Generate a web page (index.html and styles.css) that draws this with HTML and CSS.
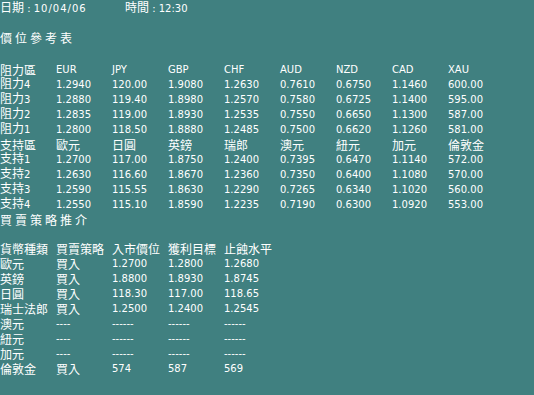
FILE: index.html
```html
<!DOCTYPE html>
<html>
<head>
<meta charset="utf-8">
<link rel="stylesheet" href="styles.css">
</head>
<body>
<div class="top">
  <div class="date"><span class="k">日期</span> : <span class="num">10/04/06</span></div>
  <div class="time"><span class="k">時間</span> : 12:30</div>
</div>
<div class="title k">價位參考表</div>
<table class="grid">
  <tr><td class="k">阻力區</td><td>EUR</td><td>JPY</td><td>GBP</td><td>CHF</td><td>AUD</td><td>NZD</td><td>CAD</td><td>XAU</td></tr>
  <tr><td><span class="k">阻力</span>4</td><td>1.2940</td><td>120.00</td><td>1.9080</td><td>1.2630</td><td>0.7610</td><td>0.6750</td><td>1.1460</td><td>600.00</td></tr>
  <tr><td><span class="k">阻力</span>3</td><td>1.2880</td><td>119.40</td><td>1.8980</td><td>1.2570</td><td>0.7580</td><td>0.6725</td><td>1.1400</td><td>595.00</td></tr>
  <tr><td><span class="k">阻力</span>2</td><td>1.2835</td><td>119.00</td><td>1.8930</td><td>1.2535</td><td>0.7550</td><td>0.6650</td><td>1.1300</td><td>587.00</td></tr>
  <tr><td><span class="k">阻力</span>1</td><td>1.2800</td><td>118.50</td><td>1.8880</td><td>1.2485</td><td>0.7500</td><td>0.6620</td><td>1.1260</td><td>581.00</td></tr>
  <tr class="k"><td>支持區</td><td>歐元</td><td>日圓</td><td>英鎊</td><td>瑞郎</td><td>澳元</td><td>紐元</td><td>加元</td><td>倫敦金</td></tr>
  <tr><td><span class="k">支持</span>1</td><td>1.2700</td><td>117.00</td><td>1.8750</td><td>1.2400</td><td>0.7395</td><td>0.6470</td><td>1.1140</td><td>572.00</td></tr>
  <tr><td><span class="k">支持</span>2</td><td>1.2630</td><td>116.60</td><td>1.8670</td><td>1.2360</td><td>0.7350</td><td>0.6400</td><td>1.1080</td><td>570.00</td></tr>
  <tr><td><span class="k">支持</span>3</td><td>1.2590</td><td>115.55</td><td>1.8630</td><td>1.2290</td><td>0.7265</td><td>0.6340</td><td>1.1020</td><td>560.00</td></tr>
  <tr><td><span class="k">支持</span>4</td><td>1.2550</td><td>115.10</td><td>1.8590</td><td>1.2235</td><td>0.7190</td><td>0.6300</td><td>1.0920</td><td>553.00</td></tr>
</table>
<div class="subtitle k">買賣策略推介</div>
<table class="grid strat">
  <tr class="k"><td>貨幣種類</td><td>買賣策略</td><td>入市價位</td><td>獲利目標</td><td class="wide">止蝕水平</td></tr>
  <tr><td class="k">歐元</td><td class="k">買入</td><td>1.2700</td><td>1.2800</td><td>1.2680</td></tr>
  <tr><td class="k">英鎊</td><td class="k">買入</td><td>1.8800</td><td>1.8930</td><td>1.8745</td></tr>
  <tr><td class="k">日圓</td><td class="k">買入</td><td>118.30</td><td>117.00</td><td>118.65</td></tr>
  <tr><td class="k">瑞士法郎</td><td class="k">買入</td><td>1.2500</td><td>1.2400</td><td>1.2545</td></tr>
  <tr><td class="k">澳元</td><td>----</td><td>------</td><td>------</td><td>------</td></tr>
  <tr><td class="k">紐元</td><td>----</td><td>------</td><td>------</td><td>------</td></tr>
  <tr><td class="k">加元</td><td>----</td><td>------</td><td>------</td><td>------</td></tr>
  <tr><td class="k">倫敦金</td><td class="k">買入</td><td>574</td><td>587</td><td>569</td></tr>
</table>
</body>
</html>
```

FILE: styles.css
```css
html, body {
  margin: 0;
  padding: 0;
  background: #408080;
}
body {
  color: #ffffff;
  font-family: "DejaVu Sans", sans-serif;
  font-size: 10px;
  line-height: 15px;
}
.k {
  font-family: "Noto Sans CJK TC", "Noto Sans CJK SC", sans-serif;
  font-size: 12px;
}
.grid span.k {
  display: inline-block;
  height: 15px;
  line-height: 11.6px;
  vertical-align: baseline;
}
.top {
  display: flex;
  height: 18px;
  line-height: 18px;
}
.top span.k {
  display: inline-block;
  height: 18px;
  line-height: 14.6px;
  vertical-align: baseline;
}
.date {
  width: 125px;
}
.num {
  letter-spacing: 1px;
}
.title {
  margin-top: 12px;
  height: 15px;
  line-height: 15px;
  letter-spacing: 3px;
}
.grid {
  margin-top: 17px;
  border-collapse: collapse;
  border-spacing: 0;
  table-layout: fixed;
}
.grid td {
  width: 56px;
  height: 15px;
  line-height: 15px;
  padding: 0;
  white-space: nowrap;
  vertical-align: middle;
}
.grid td.wide {
  width: 70px;
}
.subtitle {
  height: 15px;
  line-height: 15px;
  letter-spacing: 3px;
}
.strat {
  margin-top: 14px;
}
```
